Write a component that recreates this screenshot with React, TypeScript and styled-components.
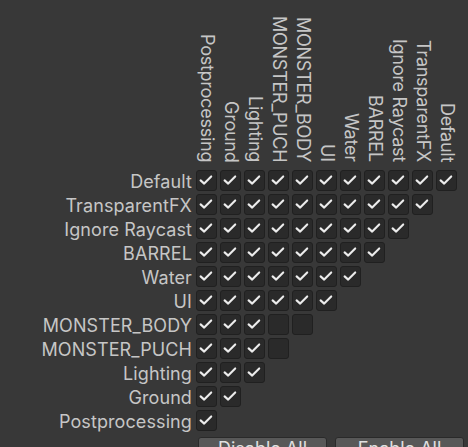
import styled, { createGlobalStyle } from "styled-components";

const LAYERS = [
  "Default",
  "TransparentFX",
  "Ignore Raycast",
  "BARREL",
  "Water",
  "UI",
  "MONSTER_BODY",
  "MONSTER_PUCH",
  "Lighting",
  "Ground",
  "Postprocessing",
];

// pairs of layers that don't collide
const OFF: Record<string, string[]> = {
  MONSTER_BODY: ["MONSTER_PUCH", "MONSTER_BODY"],
  MONSTER_PUCH: ["MONSTER_PUCH"],
};

const COLUMNS = [...LAYERS].reverse();

const GlobalStyle = createGlobalStyle`
  html, body {
    margin: 0;
    padding: 0;
    background: #383838;
    overflow: hidden;
  }
`;

const CheckIcon = () => (
  <svg width="16" height="16" viewBox="0 0 16 16" fill="none">
    <polyline
      points="2.6,8.4 6.2,11.6 13.2,4.4"
      stroke="#ececec"
      strokeWidth="2.1"
      strokeLinecap="round"
      strokeLinejoin="round"
    />
  </svg>
);

const App = () => {
  return (
    <Matrix>
      <GlobalStyle />

      <HeaderRow>
        <Corner />
        {COLUMNS.map((name) => (
          <HeaderCell key={name}>
            <VerticalLabel>{name}</VerticalLabel>
          </HeaderCell>
        ))}
      </HeaderRow>

      {LAYERS.map((row, i) => (
        <Row key={row}>
          <RowLabel>{row}</RowLabel>
          {COLUMNS.slice(0, LAYERS.length - i).map((col) => {
            const checked = !(OFF[row] || []).includes(col);
            return (
              <Cell key={col}>
                <Toggle>{checked && <CheckIcon />}</Toggle>
              </Cell>
            );
          })}
        </Row>
      ))}

      <Buttons>
        <Button>Disable All</Button>
        <Button>Enable All</Button>
      </Buttons>
    </Matrix>
  );
};

export default App;

const Matrix = styled.div`
  width: 468px;
  height: 447px;
  background: #383838;
  font-family: Inter, "Liberation Sans", sans-serif;
  font-size: 18px;
  letter-spacing: 0.1px;
  color: #c6c6c6;
`;

const HeaderRow = styled.div`
  display: flex;
  height: 168px;
`;

const Corner = styled.div`
  width: 194px;
  flex-shrink: 0;
`;

const HeaderCell = styled.div`
  width: 24px;
  flex-shrink: 0;
  display: flex;
  align-items: flex-end;
  justify-content: center;
  padding-bottom: 6px;
  padding-left: 1px;
  box-sizing: border-box;
`;

const VerticalLabel = styled.span`
  writing-mode: vertical-rl;
  white-space: nowrap;
  line-height: 22px;
  letter-spacing: -0.25px;
`;

const Row = styled.div`
  display: flex;
  height: 24px;
  align-items: center;
`;

const RowLabel = styled.div`
  width: 194px;
  height: 24px;
  flex-shrink: 0;
  text-align: right;
  padding: 2px 2px 0 0;
  box-sizing: border-box;
  white-space: nowrap;
  line-height: 24px;
`;

const Cell = styled.div`
  width: 24px;
  height: 24px;
  flex-shrink: 0;
  display: flex;
  align-items: center;
  justify-content: center;
`;

const Toggle = styled.div`
  width: 21px;
  height: 21px;
  box-sizing: border-box;
  border: 1px solid #202020;
  border-radius: 3px;
  background: #2a2a2a;
  display: flex;
  align-items: center;
  justify-content: center;
`;

const Buttons = styled.div`
  display: flex;
  gap: 8px;
  padding: 5px 0 0 198px;
`;

const Button = styled.button`
  width: 129px;
  height: 22px;
  padding: 2px 0 0;
  box-sizing: border-box;
  border: 1px solid #2a2a2a;
  border-radius: 3px;
  background: #585858;
  color: #e0e0e0;
  font-family: Inter, "Liberation Sans", sans-serif;
  font-size: 18px;
  line-height: 18px;
  text-align: center;
`;
